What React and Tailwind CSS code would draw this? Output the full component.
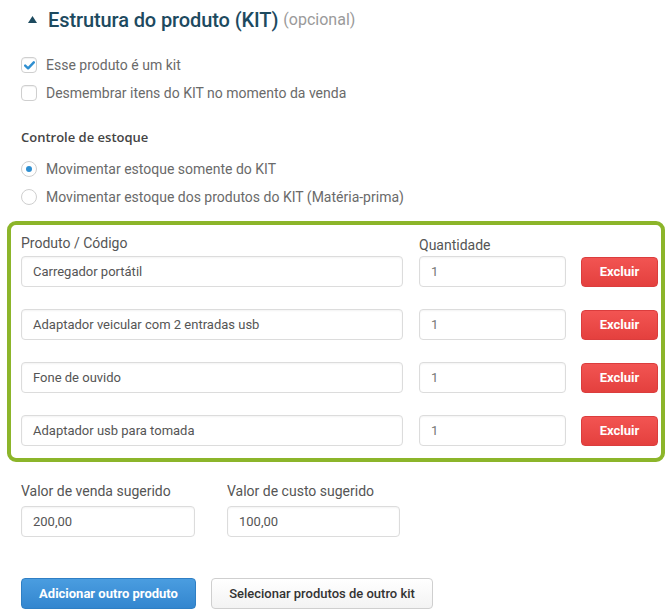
import React from "react";

const items = [
  "Carregador portátil",
  "Adaptador veicular com 2 entradas usb",
  "Fone de ouvido",
  "Adaptador usb para tomada",
];

const Check = ({ checked }) => (
  <span className="w-[16px] h-[16px] rounded-[4px] border border-[#cfcfcf] bg-white flex items-center justify-center shadow-[inset_0_1px_1px_rgba(0,0,0,0.06)]">
    {checked && (
      <svg width="11" height="9" viewBox="0 0 11 9">
        <path d="M1.2 4.6 L4.1 7.3 L9.8 1.3" fill="none" stroke="#2f8fd1" strokeWidth="2.4" strokeLinecap="round" strokeLinejoin="round" />
      </svg>
    )}
  </span>
);

const Radio = ({ checked }) => (
  <span className="w-[16px] h-[16px] rounded-full border border-[#cfcfcf] bg-white flex items-center justify-center">
    {checked && <span className="w-[6px] h-[6px] rounded-full bg-[#2f8fd1]" />}
  </span>
);

const Field = ({ value, className }) => (
  <div className={"h-[31px] border border-[#dcdcdc] rounded-[4px] bg-white flex items-center px-[11px] text-[13px] text-[#555] shadow-[inset_0_1px_2px_rgba(0,0,0,0.05)] " + className}>
    {value}
  </div>
);

export default function App() {
  return (
    <div className="w-[669px] h-[611px] bg-white overflow-hidden font-['Roboto',sans-serif] text-[#6a6a6a]">
      <div className="flex items-center h-[38px] pl-[28px] pt-[1px]">
        <svg width="9" height="7" viewBox="0 0 9 7" className="mr-[11px]">
          <path d="M4.5 0 L9 7 L0 7 Z" fill="#1d4a5f" />
        </svg>
        <span className="text-[20px] font-medium text-[#1d4a5f] tracking-[-0.1px]">Estrutura do produto (KIT)</span>
        <span className="text-[16px] text-[#9a9a9a] ml-[5px]">(opcional)</span>
      </div>

      <div className="pl-[21px] mt-[19px] flex flex-col gap-[12px] text-[14px]">
        <label className="flex items-center gap-[9px] h-[16px]">
          <Check checked />
          <span>Esse produto é um kit</span>
        </label>
        <label className="flex items-center gap-[9px] h-[16px]">
          <Check />
          <span>Desmembrar itens do KIT no momento da venda</span>
        </label>
      </div>

      <div className="pl-[21px] mt-[28px] text-[13px] font-semibold text-[#444] font-['Open_Sans',sans-serif] h-[16px] leading-[16px]">
        Controle de estoque
      </div>

      <div className="pl-[21px] mt-[16px] flex flex-col gap-[12px] text-[14px]">
        <label className="flex items-center gap-[9px] h-[16px]">
          <Radio checked />
          <span>Movimentar estoque somente do KIT</span>
        </label>
        <label className="flex items-center gap-[9px] h-[16px]">
          <Radio />
          <span>Movimentar estoque dos produtos do KIT (Matéria-prima)</span>
        </label>
      </div>

      <div className="ml-[7px] mt-[16px] w-[658px] h-[241px] border-[4px] border-[#8cb52a] rounded-[9px] pl-[10px] pt-[7px]">
        <div className="flex text-[14px] text-[#555] h-[24px]">
          <span className="w-[398px] pt-[1px]">Produto / Código</span>
          <span className="pt-[3px]">Quantidade</span>
        </div>
        <div className="flex flex-col gap-[22px]">
          {items.map((name) => (
            <div key={name} className="flex items-center">
              <Field value={name} className="w-[382px]" />
              <Field value="1" className="w-[147px] ml-[16px] text-[#777]" />
              <button className="ml-[15px] w-[77px] h-[30px] rounded-[4px] bg-gradient-to-b from-[#f25452] to-[#e4403e] border border-[#db3d3d] text-white text-[13px] font-bold">
                Excluir
              </button>
            </div>
          ))}
        </div>
      </div>

      <div className="pl-[21px] mt-[20px] flex gap-[32px]">
        <div className="flex flex-col">
          <span className="text-[14px] text-[#555] h-[24px] leading-[18px]">Valor de venda sugerido</span>
          <Field value="200,00" className="w-[174px]" />
        </div>
        <div className="flex flex-col">
          <span className="text-[14px] text-[#555] h-[24px] leading-[18px]">Valor de custo sugerido</span>
          <Field value="100,00" className="w-[173px]" />
        </div>
      </div>

      <div className="pl-[21px] mt-[41px] flex gap-[15px]">
        <button className="w-[175px] h-[31px] rounded-[4px] bg-gradient-to-b from-[#4a9de0] to-[#3386cf] border border-[#2f7fc4] text-white text-[13px] font-bold">
          Adicionar outro produto
        </button>
        <button className="w-[222px] h-[31px] rounded-[4px] bg-gradient-to-b from-white to-[#f3f3f3] border border-[#cfcfcf] text-[#333] text-[13px] font-medium">
          Selecionar produtos de outro kit
        </button>
      </div>
    </div>
  );
}
